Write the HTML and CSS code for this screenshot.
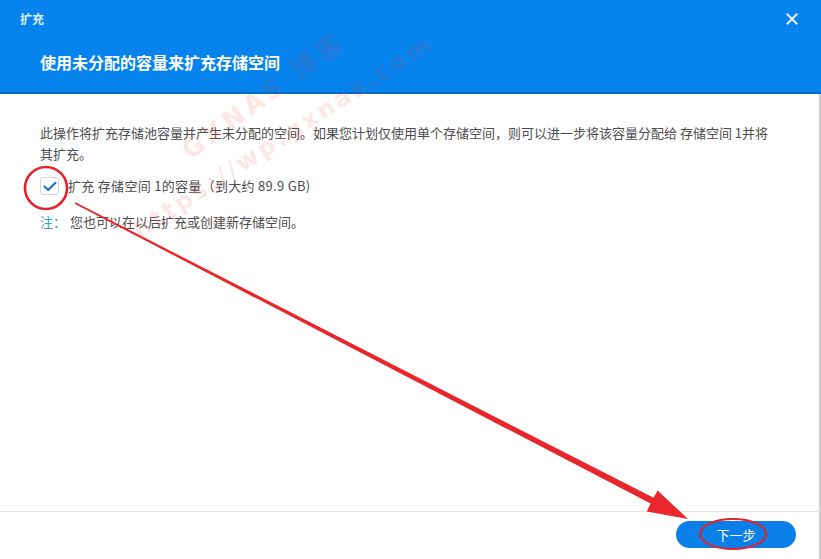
FILE: index.html
```html
<!DOCTYPE html>
<html lang="zh-CN">
<head>
<meta charset="utf-8">
<title>扩充</title>
<link rel="stylesheet" href="styles.css">
</head>
<body>
<div class="dialog">
  <header class="header">
    <div class="titlebar">
      <span class="title">扩充</span>
      <svg class="close" width="12" height="12" viewBox="0 0 12 12"><path d="M1.5 1.5 L10.5 10.5 M10.5 1.5 L1.5 10.5" stroke="#e8f3ff" stroke-width="2" stroke-linecap="square"/></svg>
    </div>
    <h1 class="subtitle">使用未分配的容量来扩充存储空间</h1>
  </header>
  <main class="content">
    <p class="desc">此操作将扩充存储池容量并产生未分配的空间。如果您计划仅使用单个存储空间，则可以进一步将该容量分配给 存储空间 1并将其扩充。</p>
    <label class="check-row">
      <span class="checkbox"><svg width="14" height="11" viewBox="0 0 14 11"><path d="M1.5 5.5 L5.2 9 L12.5 1.8" fill="none" stroke="#1b73d6" stroke-width="2.2" stroke-linecap="round" stroke-linejoin="round"/></svg></span>
      <span class="check-label">扩充 存储空间 1的容量（到大约 89.9 GB)</span>
    </label>
    <p class="note"><span class="note-tag">注：</span>您也可以在以后扩充或创建新存储空间。</p>
  </main>
  <footer class="footer">
    <button class="btn-next">下一步</button>
  </footer>
</div>
<div class="watermark wm1">GXNAS 博客</div>
<div class="watermark wm2">https://wp.gxnas.com</div>
<svg class="annot" width="821" height="559" viewBox="0 0 821 559">
  <ellipse cx="46" cy="188" rx="21" ry="21" fill="none" stroke="#e3222a" stroke-width="2.6"/>
  <polygon points="75.4,202.3 653.6,497.8 657.6,490.5 688,519 646.8,511.4 650.6,503.6 74.6,203.7" fill="#e8262c"/>
  <ellipse cx="733" cy="534" rx="33" ry="15" fill="none" stroke="#e3222a" stroke-width="2"/>
</svg>
</body>
</html>
```
FILE: styles.css
```css
* { box-sizing: border-box; }
html, body { margin: 0; padding: 0; }
body {
  width: 821px;
  height: 559px;
  overflow: hidden;
  position: relative;
  background: #ffffff;
  font-family: "Noto Sans CJK SC", "Noto Sans", sans-serif;
}
.dialog {
  display: flex;
  flex-direction: column;
  height: 559px;
}
.header {
  background: #0783ee;
  height: 94px;
  border-bottom: 2px solid #0a6cc9;
  padding: 0 23px 0 20px;
  display: flex;
  flex-direction: column;
}
.titlebar {
  display: flex;
  justify-content: space-between;
  align-items: center;
  height: 37px;
}
.title {
  font-size: 12px;
  font-weight: 700;
  color: #dcefff;
  line-height: 16px;
}
.close { display: block; }
.subtitle {
  margin: 14px 0 0 20px;
  font-size: 16px;
  font-weight: 700;
  color: #ffffff;
  line-height: 22px;
}
.content {
  flex: 1;
  padding: 28px 40px 0 40px;
  border-right: 2px solid #cfcfcf;
  color: #4d4d4d;
  font-size: 13px;
}
.desc {
  margin: 0;
  line-height: 21px;
  width: 738px;
}
.check-row {
  display: flex;
  align-items: center;
  margin-top: 13px;
  height: 18px;
}
.checkbox {
  width: 19px;
  height: 18px;
  border: 1px solid #cfd6de;
  border-radius: 3px;
  background: #fff;
  display: flex;
  align-items: center;
  justify-content: center;
}
.check-label {
  margin-left: 9px;
  line-height: 18px;
  color: #4d4d4d;
  letter-spacing: 0.3px;
}
.note {
  margin: 16px 0 0 0;
  line-height: 21px;
}
.note-tag {
  color: #3c9cb3;
  margin-right: 4px;
}
.footer {
  height: 48px;
  border-top: 1px solid #e4e4e4;
  border-right: 2px solid #cfcfcf;
  display: flex;
  justify-content: flex-end;
  align-items: flex-start;
  padding: 9px 23px 0 0;
}
.btn-next {
  width: 120px;
  height: 27px;
  border: none;
  border-radius: 14px;
  background: #0a7fe8;
  color: #ffffff;
  font-family: "Noto Sans CJK SC", sans-serif;
  font-size: 13px;
  line-height: 27px;
  padding: 0;
}
.watermark {
  position: absolute;
  font-family: "DejaVu Sans", "Noto Sans CJK SC", sans-serif;
  font-weight: 700;
  color: rgba(235, 60, 60, 0.12);
  transform-origin: 0 0;
  white-space: nowrap;
  pointer-events: none;
  line-height: 30px;
}
.wm1 { left: 176px; top: 141px; font-size: 26px; letter-spacing: 4px; transform: rotate(-36deg); }
.wm2 { left: 127px; top: 220px; font-size: 24px; letter-spacing: 3px; transform: rotate(-33deg); }
.annot {
  position: absolute;
  left: 0;
  top: 0;
  pointer-events: none;
}
```
